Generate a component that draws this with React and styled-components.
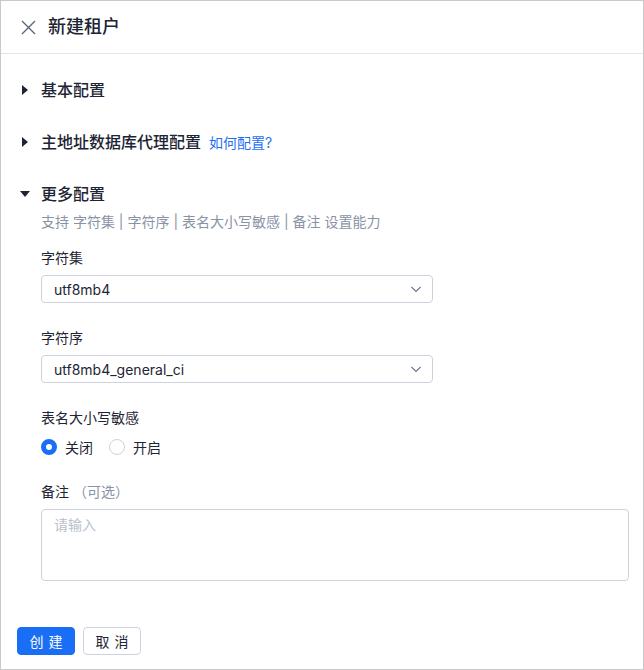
import React, { useState } from "react";
import styled, { createGlobalStyle } from "styled-components";

const Global = createGlobalStyle`
  html, body { margin: 0; padding: 0; background: #fff; }
  * { box-sizing: border-box; }
  body { font-family: "Inter", "Noto Sans CJK SC", sans-serif; color: #1d2433; }
`;

const Page = styled.div`
  width: 644px;
  height: 670px;
  border: 1px solid #c9c9c9;
  display: flex;
  flex-direction: column;
  background: #fff;
`;

const Header = styled.div`
  height: 53px;
  flex: none;
  border-bottom: 1px solid #e2e5eb;
  display: flex;
  align-items: center;
  padding-left: 18px;
  gap: 11px;
`;

const CloseBtn = styled.button`
  width: 18px;
  height: 18px;
  padding: 0;
  border: none;
  background: none;
  display: flex;
  align-items: center;
  justify-content: center;
  color: #5d6577;
  cursor: pointer;
`;

const Title = styled.h1`
  margin: 0;
  font-size: 18px;
  font-weight: 500;
  line-height: 26px;
  color: #1d2433;
`;

const Body = styled.div`
  flex: 1;
  padding: 24px 15px 0 16px;
  display: flex;
  flex-direction: column;
  gap: 28px;
`;

const Section = styled.section`
  display: flex;
  flex-direction: column;
`;

const SectionHead = styled.div`
  display: flex;
  align-items: center;
  height: 24px;
  cursor: pointer;
`;

const Caret = styled.span`
  width: 16px;
  height: 24px;
  margin-right: 8px;
  display: flex;
  align-items: center;
  justify-content: center;
  color: #1d2433;
`;

const SectionTitle = styled.span`
  font-size: 16px;
  font-weight: 500;
  line-height: 24px;
  color: #1d2433;
`;

const HelpLink = styled.a`
  margin-left: 8px;
  font-size: 14px;
  color: #1f6ff2;
  text-decoration: none;
  line-height: 22px;
  padding-top: 1px;
`;

const SectionBody = styled.div`
  padding-left: 24px;
  display: flex;
  flex-direction: column;
`;

const Desc = styled.p`
  margin: 5px 0 14px;
  font-size: 14px;
  line-height: 22px;
  color: #8a93a6;
`;

const FormItem = styled.div`
  display: flex;
  flex-direction: column;
  margin-bottom: ${(p) => p.$mb ?? 24}px;
`;

const Label = styled.label`
  font-size: 14px;
  line-height: 22px;
  color: #1d2433;
  margin-bottom: 6px;
`;

const Optional = styled.span`
  color: #8a93a6;
  margin-left: 4px;
`;

const SelectBox = styled.div`
  width: 392px;
  height: 28px;
  border: 1px solid #ccd3df;
  border-radius: 4px;
  display: flex;
  align-items: center;
  justify-content: space-between;
  padding: 0 10px 0 12px;
  font-size: 14px;
  color: #1d2433;
  background: #fff;
`;

const Chevron = styled.span`
  display: flex;
  color: #6d7588;
`;

const RadioGroup = styled.div`
  display: flex;
  align-items: center;
  gap: 16px;
  height: 24px;
`;

const RadioItem = styled.label`
  display: flex;
  align-items: center;
  gap: 8px;
  font-size: 14px;
  color: #1d2433;
  cursor: pointer;
`;

const RadioDot = styled.span`
  width: 16px;
  height: 16px;
  border-radius: 50%;
  border: ${(p) => (p.$checked ? "5px solid #1a6ef5" : "1px solid #ccd3df")};
  background: #fff;
  flex: none;
`;

const TextArea = styled.textarea`
  width: 588px;
  height: 72px;
  border: 1px solid #ccd3df;
  border-radius: 4px;
  padding: 4px 12px;
  font-family: "Inter", "Noto Sans CJK SC", sans-serif;
  font-size: 14px;
  line-height: 22px;
  color: #1d2433;
  resize: none;
  outline: none;
  &::placeholder { color: #b8bfcc; }
`;

const Footer = styled.div`
  flex: none;
  display: flex;
  gap: 8px;
  padding: 0 16px 14px;
`;

const Button = styled.button`
  height: 28px;
  width: ${(p) => (p.$primary ? 58 : 58)}px;
  padding: 0;
  border-radius: 4px;
  font-family: "Inter", "Noto Sans CJK SC", sans-serif;
  font-size: 14px;
  letter-spacing: 5px;
  text-indent: 5px;
  cursor: pointer;
  border: 1px solid ${(p) => (p.$primary ? "#1a6ef5" : "#ccd3df")};
  background: ${(p) => (p.$primary ? "#1a6ef5" : "#fff")};
  color: ${(p) => (p.$primary ? "#fff" : "#1d2433")};
`;

const RightTri = () => (
  <svg width="6" height="10" viewBox="0 0 6 10"><path d="M0 0 L6 5 L0 10 Z" fill="currentColor" /></svg>
);
const DownTri = () => (
  <svg width="10" height="6" viewBox="0 0 10 6"><path d="M0 0 L10 0 L5 6 Z" fill="currentColor" /></svg>
);
const ChevronDown = () => (
  <svg width="12" height="12" viewBox="0 0 12 12"><path d="M1.5 4 L6 8.5 L10.5 4" fill="none" stroke="currentColor" strokeWidth="1.1" /></svg>
);

export default function App() {
  const [caseSensitive, setCaseSensitive] = useState(false);
  return (
    <Page>
      <Global />
      <Header>
        <CloseBtn aria-label="关闭">
          <svg width="15" height="15" viewBox="0 0 15 15">
            <path d="M1 1 L14 14 M14 1 L1 14" stroke="currentColor" strokeWidth="1.4" fill="none" />
          </svg>
        </CloseBtn>
        <Title>新建租户</Title>
      </Header>
      <Body>
        <Section>
          <SectionHead>
            <Caret><RightTri /></Caret>
            <SectionTitle>基本配置</SectionTitle>
          </SectionHead>
        </Section>
        <Section>
          <SectionHead>
            <Caret><RightTri /></Caret>
            <SectionTitle>主地址数据库代理配置</SectionTitle>
            <HelpLink href="#">如何配置?</HelpLink>
          </SectionHead>
        </Section>
        <Section>
          <SectionHead>
            <Caret><DownTri /></Caret>
            <SectionTitle>更多配置</SectionTitle>
          </SectionHead>
          <SectionBody>
            <Desc>支持 字符集 | 字符序 | 表名大小写敏感 | 备注 设置能力</Desc>
            <FormItem>
              <Label>字符集</Label>
              <SelectBox>
                <span>utf8mb4</span>
                <Chevron><ChevronDown /></Chevron>
              </SelectBox>
            </FormItem>
            <FormItem>
              <Label>字符序</Label>
              <SelectBox>
                <span>utf8mb4_general_ci</span>
                <Chevron><ChevronDown /></Chevron>
              </SelectBox>
            </FormItem>
            <FormItem $mb={22}>
              <Label>表名大小写敏感</Label>
              <RadioGroup>
                <RadioItem onClick={() => setCaseSensitive(false)}>
                  <RadioDot $checked={!caseSensitive} />
                  关闭
                </RadioItem>
                <RadioItem onClick={() => setCaseSensitive(true)}>
                  <RadioDot $checked={caseSensitive} />
                  开启
                </RadioItem>
              </RadioGroup>
            </FormItem>
            <FormItem $mb={0}>
              <Label>备注<Optional>（可选）</Optional></Label>
              <TextArea placeholder="请输入" />
            </FormItem>
          </SectionBody>
        </Section>
      </Body>
      <Footer>
        <Button $primary>创建</Button>
        <Button>取消</Button>
      </Footer>
    </Page>
  );
}
